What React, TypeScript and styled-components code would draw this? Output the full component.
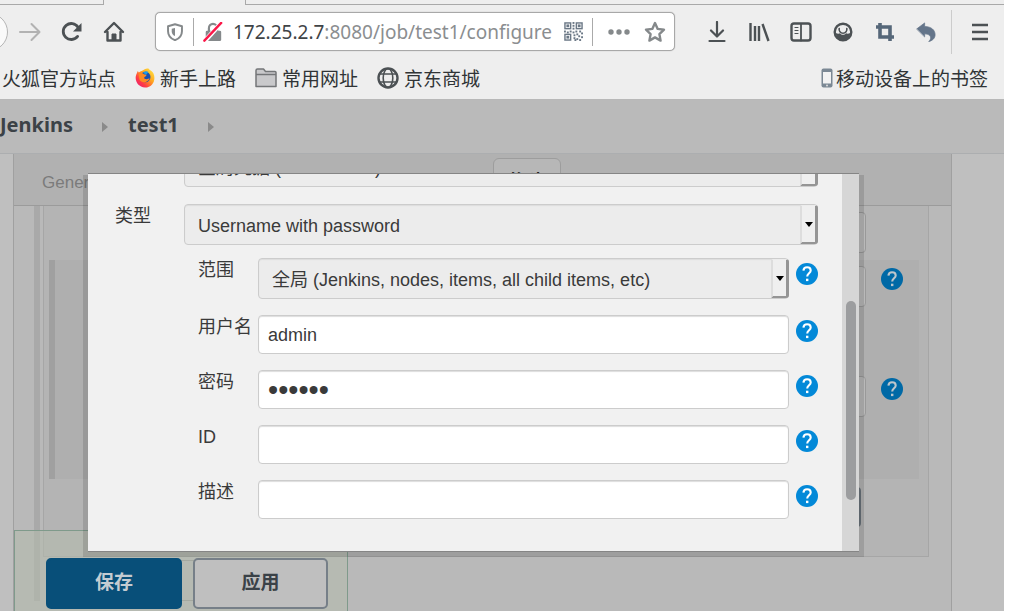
import React from 'react';
import styled, { createGlobalStyle, css } from 'styled-components';

const Global = createGlobalStyle`
  * { box-sizing: border-box; }
  body { margin: 0; background: #fff; }
  button, input, select { font: inherit; color: inherit; margin: 0; }
`;

const cjk = '"Noto Sans CJK SC", sans-serif';

const Window = styled.div`
  display: flex;
  flex-direction: column;
  height: 100vh;
  margin-right: 16px;
  overflow: hidden;
  font-family: "Noto Sans", ${cjk};
  color: #3a3a3a;
`;

/* ---------- browser chrome ---------- */

const TabStrip = styled.div`
  display: flex;
  flex: none;
  height: 5px;
  background: #eee;
`;

const TabSegment = styled.div<{ $width?: number; $active?: boolean }>`
  flex: ${p => (p.$width ? `0 0 ${p.$width}px` : '1')};
  ${p => (p.$active
    ? css`border: solid #a9a9a9; border-width: 0 1px;`
    : css`border-bottom: 1px solid #a9a9a9; box-shadow: 0 1px 0 #ccc;`)}
`;

const Toolbar = styled.nav`
  display: flex;
  flex: none;
  align-items: center;
  height: 53px;
  background: #eee;
  color: #4c5154;
`;

const IconButton = styled.button<{ $gap?: number; $faint?: boolean }>`
  display: flex;
  flex: none;
  margin-left: ${p => p.$gap ?? 20}px;
  padding: 0;
  border: 0;
  background: none;
  color: ${p => (p.$faint ? '#b2b2b2' : 'inherit')};
`;

const BackButton = styled.button`
  flex: none;
  width: 38px;
  height: 38px;
  margin-left: -30px;
  border: 1px solid #b5b5b5;
  border-radius: 50%;
  background: #fafafa;
`;

const AddressBar = styled.div`
  display: flex;
  flex: 1;
  align-items: center;
  height: 39px;
  min-width: 0;
  margin-left: 30px;
  padding: 0 8px 0 10px;
  border: 1px solid #a8a8a8;
  border-radius: 5px;
  background: #fff;
  box-shadow: 0 0 1px #999;
  color: #85898b;
`;

const Address = styled.div`
  flex: 1;
  margin-left: 10px;
  font-size: 19px;
  line-height: 24px;
  white-space: nowrap;
  color: #8b8e90;
  b { font-weight: 400; color: #3f4447; }
`;

const Rule = styled.span<{ $height: number; $gap: number; $faint?: boolean }>`
  flex: none;
  width: 1px;
  height: ${p => p.$height}px;
  margin: 0 ${p => p.$gap}px;
  background: ${p => (p.$faint ? '#ccc' : '#aaa')};
`;

const Bookmarks = styled.nav`
  display: flex;
  flex: none;
  align-items: center;
  height: 42px;
  padding: 0 16px 2px 2px;
  border-bottom: 1px solid #b8b8b8;
  background: #eee;
`;

const Bookmark = styled.a<{ $end?: boolean }>`
  display: flex;
  align-items: center;
  gap: ${p => (p.$end ? 3 : 5)}px;
  margin-left: ${p => (p.$end ? 'auto' : '0')};
  margin-right: ${p => (p.$end ? 0 : 19)}px;
  font: 19px/28px ${cjk};
  white-space: nowrap;
  text-decoration: none;
  color: #303436;
`;

/* ---------- dimmed Jenkins page ---------- */

const Page = styled.div`
  position: relative;
  display: flex;
  flex: 1;
  flex-direction: column;
  min-height: 0;
  overflow: hidden;
  background: #bfbfbf;
`;

const Breadcrumbs = styled.nav`
  display: flex;
  flex: none;
  align-items: center;
  height: 54px;
  padding-bottom: 3px;
  border-bottom: 1px solid #acaeb0;
  background: #bababa;
`;

const Crumb = styled.a`
  font-size: 20px;
  font-weight: 700;
  line-height: 26px;
  text-decoration: none;
  color: #3c4247;
`;

const CrumbArrow = styled.span`
  margin: 3px 20px 0 29px;
  border: solid transparent;
  border-width: 5px 0 5px 6px;
  border-left-color: #8a8a8a;
`;

const ConfigPanel = styled.main`
  display: flex;
  flex: 1 0 auto;
  flex-direction: column;
  margin: 0 52px 0 13px;
  border: solid #a0a0a0;
  border-width: 0 1px;
  background: #b9b9b9;
`;

const SectionTabs = styled.div`
  display: flex;
  align-items: flex-start;
  height: 52px;
  padding: 4px 0 0 28px;
  border-bottom: 1px solid #9b9b9b;
  background: #b1b1b1;
`;

const SectionTab = styled.a`
  flex: 0 0 451px;
  padding-top: 13px;
  font: 17px/24px "Liberation Sans", ${cjk};
  text-decoration: none;
  color: #7b7b7b;
`;

const TabButton = styled.button`
  width: 68px;
  height: 32px;
  padding: 8px 0 0;
  border: 1px solid #9d9d9d;
  border-radius: 6px;
  background: #b7b7b7;
  font-size: 18px;
  font-weight: 700;
  color: #222;
`;

const Section = styled.section`
  margin: 0 22px 0 20px;
  padding-left: 3px;
  border-left: 6px solid #a9a9a9;
`;

const Repository = styled.div`
  height: 351px;
  padding: 6px 9px 0 5px;
  border: solid #a6a6a6;
  border-width: 0 1px 1px;
  background: #b4b4b4;
`;

const RepositoryFields = styled.div`
  height: 219px;
  padding: 6px 0 0 128px;
  border-left: 6px solid #a0a0a0;
  background: #afafaf;
`;

const PageRow = styled.div<{ $height: number; $inset?: number }>`
  display: flex;
  align-items: flex-start;
  gap: 15px;
  height: ${p => p.$height}px;
  padding: 0 ${p => p.$inset ?? 16}px 0 ${p => (p.$inset ? 134 : 0)}px;
`;

const PageInput = styled.input`
  flex: 1;
  height: 41px;
  border: 1px solid #999;
  border-radius: 4px;
  background: #b9b9b9;
`;

const AdvancedButton = styled.button`
  display: block;
  width: 100px;
  height: 40px;
  margin: 8px 58px 0 auto;
  border: 2px solid #69727a;
  border-radius: 4px;
  background: #b9b9b9;
`;

const StepButton = styled.button`
  display: flex;
  align-items: center;
  justify-content: flex-end;
  width: 158px;
  height: 41px;
  margin: 3px 0 0 14px;
  padding: 0 12px;
  border: 1px solid #8c8c8c;
  background: #b9b9b9;
`;

const ActionBar = styled.div`
  position: absolute;
  bottom: 0;
  left: 14px;
  display: flex;
  gap: 11px;
  height: 81px;
  padding: 27px 19px 0 31px;
  border: 1px solid #7f9a8b;
  border-bottom: 0;
  background: rgba(180, 186, 174, 0.6);
`;

const ActionButton = styled.button<{ $primary?: boolean }>`
  width: ${p => (p.$primary ? 136 : 135)}px;
  height: 51px;
  padding: 0 0 6px;
  border: 2px solid ${p => (p.$primary ? '#084f79' : '#767f88')};
  border-radius: 5px;
  background: ${p => (p.$primary ? '#084f79' : '#bfbfbf')};
  font: 700 19px/28px ${cjk};
  color: ${p => (p.$primary ? '#c4ccd2' : '#3a4147')};
`;

/* ---------- credentials dialog ---------- */

const DialogShade = styled.div`
  position: absolute;
  top: 75px;
  right: 140px;
  left: 83px;
  padding: 0 5px 5px;
  background: rgba(0, 0, 0, 0.12);
`;

const Dialog = styled.div`
  display: flex;
  height: 379px;
  margin-top: -2px;
  border: solid #858585;
  border-width: 1px 0;
  background: #f1f1f1;
`;

const DialogForm = styled.form`
  display: flex;
  flex: 1;
  flex-direction: column;
  justify-content: flex-end;
  min-width: 0;
  padding: 0 24px 32px 27px;
  overflow: hidden;
  font: 18px/24px "Liberation Sans", ${cjk};
`;

const DialogRow = styled.div<{ $nested?: boolean; $height: number }>`
  display: flex;
  flex: none;
  align-items: flex-start;
  height: ${p => p.$height}px;
  padding-left: ${p => (p.$nested ? 83 : 0)}px;
`;

const Label = styled.label<{ $width: number }>`
  flex: 0 0 ${p => p.$width}px;
  white-space: nowrap;
`;

const SelectFrame = styled.div`
  position: relative;
  flex: 1;
  min-width: 0;
`;

const Select = styled.select`
  display: block;
  width: 100%;
  height: 41px;
  padding: 2px 24px 0 13px;
  appearance: none;
  border: 1px solid #ccc;
  border-radius: 4px;
  background: #ececec;
  box-shadow: inset 0 1px 1px #ddd;
`;

const SelectArrow = styled.span`
  position: absolute;
  top: 1px;
  right: 0;
  bottom: 1px;
  display: flex;
  align-items: center;
  justify-content: center;
  width: 18px;
  border: solid;
  border-width: 1px 3px 2px 2px;
  border-color: #ececec #959595 #959595 #ddd;
  border-radius: 0 3px 3px 0;
  background: #efefef;
  pointer-events: none;
  &::before {
    content: "";
    border: solid transparent;
    border-width: 5px 4px 0;
    border-top-color: #000;
  }
`;

const TextInput = styled.input`
  flex: 1;
  min-width: 0;
  height: 39px;
  padding: 2px 9px 0;
  border: 1px solid #ccc;
  border-radius: 4px;
  background: #fff;
  box-shadow: inset 0 1px 1px #ddd;
  &[type="password"] { font-size: 29px; }
`;

const HelpButton = styled.button<{ $dim?: boolean }>`
  display: flex;
  flex: none;
  margin: ${p => (p.$dim ? '2px 0 0' : '5px 0 0 7px')};
  padding: 0;
  border: 0;
  background: none;
  color: ${p => (p.$dim ? '#0069a6' : '#0389d8')};
  --mark: ${p => (p.$dim ? '#bcc6cc' : '#fff')};
`;

const ScrollTrack = styled.div`
  flex: 0 0 17px;
  padding: 127px 3px 0 4px;
  background: #d6d6d6;
`;

const ScrollThumb = styled.div`
  height: 199px;
  border-radius: 5px;
  background: #9c9d9f;
`;

/* ---------- icons ---------- */

const Svg = ({ size = 22, children }: { size?: number; children: React.ReactNode }) => (
  <svg width={size} height={size} viewBox="0 0 22 22" fill="none" stroke="currentColor" strokeWidth="2.4"
    strokeLinecap="round" strokeLinejoin="round" aria-hidden="true">{children}</svg>
);

const Help = ({ dim = false }: { dim?: boolean }) => (
  <HelpButton type="button" $dim={dim} aria-label="帮助">
    <svg width="22" height="22" viewBox="0 0 22 22" aria-hidden="true">
      <circle cx="11" cy="11" r="11" fill="currentColor" />
      <path d="M7.4 7.7C7.6 5.4 9 4.3 11.1 4.3s3.6 1.2 3.6 3.2c0 2.6-3.5 3-3.5 6" fill="none" stroke="var(--mark)" strokeWidth="2.1" />
      <rect x="10" y="15.7" width="2.4" height="2.4" fill="var(--mark)" />
    </svg>
  </HelpButton>
);

const ForwardIcon = () => <Svg><path d="M1 11H20M12.5 3l8 8-8 8" strokeWidth="2" /></Svg>;
const ReloadIcon = () => (
  <Svg><path d="M16.6 15.4A8 8 0 1 1 17 6.2L18.6 8" strokeWidth="2.8" /><path d="M20.5 2v8.4H12z" fill="currentColor" stroke="none" /></Svg>
);
const HomeIcon = () => (
  <Svg><path d="M2 11l9-9 9 9M4.5 11v8.5h13V11" /><path d="M9 19v-6h4v6z" fill="currentColor" strokeWidth="1" /></Svg>
);
const ShieldIcon = () => (
  <Svg size={18}><path d="M11 1.5L19.5 4v6c0 5.600-3.500 9-8.500 11C6 19 2.500 15.600 2.500 10V4z" /><path d="M11 6v10c-3-1.500-4-3.500-4-6V7z" fill="currentColor" stroke="none" /></Svg>
);
const LockIcon = () => (
  <Svg size={20}>
    <path d="M6.500 10V6.500a4.500 4.500 0 0 1 9 0V10" /><rect x="3" y="9.500" width="17" height="11.500" rx="1.500" fill="currentColor" stroke="none" />
    <path d="M2 21L20 1" stroke="#fff" strokeWidth="5" /><path d="M1.500 20.500L20 1" stroke="#fb1748" strokeWidth="2.600" />
  </Svg>
);
const qrDots = [[9, 0], [9, 3], [9, 6], [0, 9], [3, 10], [6, 9], [9, 10], [12, 9], [16, 9], [18, 11], [10, 13], [13, 12], [15, 14], [18, 15], [10, 16], [13, 17], [16, 18], [11, 18]];
const QrIcon = () => (
  <svg width="19" height="19" viewBox="0 0 20 20" fill="none" stroke="#6b7886" strokeWidth="1.500" aria-hidden="true">
    {[[1, 1], [13, 1], [1, 13]].map(([x, y]) => (
      <g key={`${x}-${y}`}><rect x={x} y={y} width="6" height="6" /><rect x={x + 2.3} y={y + 2.3} width="1.400" height="1.400" /></g>
    ))}
    {qrDots.map(([x, y]) => <rect key={`${x}-${y}`} x={x} y={y} width="2" height="2" fill="#6b7886" stroke="none" />)}
  </svg>
);
const MoreIcon = () => (
  <Svg><g fill="currentColor" stroke="none"><circle cx="3" cy="11" r="2.700" /><circle cx="11" cy="11" r="2.700" /><circle cx="19" cy="11" r="2.700" /></g></Svg>
);
const StarIcon = () => (
  <Svg><path d="M11 2l2.700 5.900 6.300.8-4.600 4.400 1.200 6.500-5.600-3.200-5.600 3.200 1.200-6.500L2 8.700l6.300-.8z" strokeWidth="2.400" /></Svg>
);
const DownloadIcon = () => <Svg><path d="M11 1v14M5 9.500l6 6 6-6M3.500 20h15" strokeWidth="2.200" /></Svg>;
const LibraryIcon = () => (
  <Svg><path d="M2.500 2v18M7 5v15M11 5v15" strokeWidth="2.400" strokeLinecap="butt" /><path d="M14.500 3L20.500 20" strokeWidth="2.400" strokeLinecap="butt" /></Svg>
);
const SidebarIcon = () => (
  <Svg><rect x="1.500" y="2.500" width="19" height="17" rx="2.500" /><path d="M11 3v16.500" strokeWidth="1.800" /><path d="M5 6.500h3M5 9.500h3M5 12.500h3" strokeWidth="1.200" /></Svg>
);
const AccountIcon = () => (
  <Svg><circle cx="11" cy="11" r="8.300" strokeWidth="2.400" /><path d="M7.200 7.500a3.900 3.900 0 1 0 7.600 0" strokeWidth="1.600" /><path d="M3.500 12c2 1 3.500 1 4.500.3 1.500 2 4.500 2 6 0 1 .7 2.500.7 4.500-.3-.8 4.500-4 7-7.500 7s-6.700-2.500-7.500-7z" fill="currentColor" stroke="none" /></Svg>
);
const CropIcon = () => (
  <Svg><path d="M6 2v14h14M2 6h14v14" stroke="#566779" strokeWidth="3.600" strokeLinecap="butt" strokeLinejoin="miter" /></Svg>
);
const UndoIcon = () => (
  <Svg size={20}><path d="M1 7.500L9.500 1v4C17 5 21 9 21 14c0 4-3 6.500-7 7.500 3-2.500 4-8-4.500-8.500v3z" fill="#64758a" stroke="#64758a" strokeWidth=".8" /></Svg>
);
const MenuIcon = () => <Svg><path d="M3 4h16M3 11h16M3 18h16" strokeLinecap="butt" /></Svg>;
const FirefoxIcon = () => (
  <svg width="20" height="20" viewBox="0 0 20 20" aria-hidden="true">
    <defs>
      <linearGradient id="fox" x1="1" y1="0" x2="0" y2="1">
        <stop offset="0" stopColor="#fff04a" /><stop offset=".4" stopColor="#ffa51e" /><stop offset=".7" stopColor="#ff3c45" /><stop offset="1" stopColor="#e31587" />
      </linearGradient>
    </defs>
    <path d="M2.800 3l1 1.500C6 3 7.500 3 8.500 2 10 .8 12 .5 13.500.5c.5 1.500 3.500 2 5 5 2.800 6.500-1 14-8.500 14C3 19.500-1 12 1.300 6.500z" fill="url(#fox)" />
    <circle cx="10.300" cy="9" r="5.200" fill="#1c4fae" />
    <path d="M8 4.500c2-1.500 4-1.500 5.500-.5L11 7z" fill="#1f9be8" />
    <path d="M3.500 5.500c2-1 4.500-.5 5.500.8L11.500 7c0 1.500-2 1.300-2.500 3 1.500 2 4.500 1 5.500 0-.5 4.500-8 6-10 1.500z" fill="#ff8a22" />
  </svg>
);
const FolderIcon = () => (
  <svg width="22" height="20" viewBox="0 0 22 20" fill="#c9c9cb" stroke="#747678" strokeWidth="1.500" strokeLinejoin="round" aria-hidden="true">
    <path d="M1 18.500V2.500q0-1.500 1.500-1.500h6l2 2.500H20q1 0 1 1v14z" /><path d="M1 6.500h20" />
  </svg>
);
const GlobeIcon = () => (
  <Svg><g stroke="#4c5154"><circle cx="11" cy="11" r="9.500" /><ellipse cx="11" cy="11" rx="4.800" ry="9.500" strokeWidth="1.600" /><path d="M2.500 7h17M2.500 15h17" strokeWidth="1.600" /></g></Svg>
);
const PhoneIcon = () => (
  <svg width="12" height="20" viewBox="0 0 12 20" aria-hidden="true">
    <rect x=".5" y=".5" width="11" height="19" rx="2" fill="#7b8894" /><rect x="2" y="4" width="8" height="11.500" fill="#f2f2f2" /><circle cx="6" cy="17.500" r="1" fill="#ddd" />
  </svg>
);

const textFields = [
  { id: 'username', label: '用户名', type: 'text', value: 'admin', height: 55 },
  { id: 'password', label: '密码', type: 'password', value: 'secret', height: 55 },
  { id: 'cred-id', label: 'ID', type: 'text', value: '', height: 55 },
  { id: 'description', label: '描述', type: 'text', value: '', height: 39 },
];

export default function App() {
  return (
    <Window>
      <Global />
      <TabStrip>
        <TabSegment $width={103} />
        <TabSegment $width={143} $active />
        <TabSegment />
      </TabStrip>
      <Toolbar aria-label="浏览器工具栏">
        <BackButton aria-label="后退" />
        <IconButton $gap={11} $faint aria-label="前进"><ForwardIcon /></IconButton>
        <IconButton aria-label="刷新"><ReloadIcon /></IconButton>
        <IconButton aria-label="主页"><HomeIcon /></IconButton>
        <AddressBar>
          <ShieldIcon />
          <Rule $height={28} $gap={9} />
          <LockIcon />
          <Address><b>172.25.2.7</b>:8080/job/test1/configure</Address>
          <QrIcon />
          <Rule $height={28} $gap={9} />
          <IconButton $gap={6} aria-label="更多"><MoreIcon /></IconButton>
          <IconButton $gap={14} aria-label="收藏"><StarIcon /></IconButton>
        </AddressBar>
        <IconButton $gap={31} aria-label="下载"><DownloadIcon /></IconButton>
        <IconButton aria-label="书库"><LibraryIcon /></IconButton>
        <IconButton aria-label="侧栏"><SidebarIcon /></IconButton>
        <IconButton aria-label="账户"><AccountIcon /></IconButton>
        <IconButton aria-label="截图"><CropIcon /></IconButton>
        <IconButton aria-label="撤销"><UndoIcon /></IconButton>
        <Rule $height={44} $gap={15} $faint />
        <IconButton $gap={2} aria-label="菜单"><MenuIcon /></IconButton>
        <Rule $height={0} $gap={6} />
      </Toolbar>
      <Bookmarks aria-label="书签">
        <Bookmark href="#">火狐官方站点</Bookmark>
        <Bookmark href="#"><FirefoxIcon />新手上路</Bookmark>
        <Bookmark href="#"><FolderIcon />常用网址</Bookmark>
        <Bookmark href="#"><GlobeIcon />京东商城</Bookmark>
        <Bookmark href="#" $end><PhoneIcon />移动设备上的书签</Bookmark>
      </Bookmarks>
      <Page>
        <Breadcrumbs aria-label="路径">
          <Crumb href="#">Jenkins</Crumb><CrumbArrow />
          <Crumb href="#">test1</Crumb><CrumbArrow />
        </Breadcrumbs>
        <ConfigPanel>
          <SectionTabs>
            <SectionTab href="#">General</SectionTab>
            <TabButton type="button">构建</TabButton>
          </SectionTabs>
          <Section>
            <Repository>
              <PageRow $height={48} $inset={53}><PageInput aria-label="名称" /></PageRow>
              <RepositoryFields>
                <PageRow $height={110}><PageInput aria-label="仓库" /><Help dim /></PageRow>
                <PageRow $height={44}><PageInput aria-label="分支" /><Help dim /></PageRow>
              </RepositoryFields>
              <AdvancedButton type="button" aria-label="高级" />
            </Repository>
            <StepButton type="button" aria-label="更多选项">
              <svg width="9" height="5" viewBox="0 0 9 5" aria-hidden="true"><path d="M0 0h9L4.500 5z" fill="#777" /></svg>
            </StepButton>
          </Section>
          <ActionBar>
            <ActionButton type="button" $primary>保存</ActionButton>
            <ActionButton type="button">应用</ActionButton>
          </ActionBar>
        </ConfigPanel>
        <DialogShade>
          <Dialog role="dialog" aria-label="添加凭据">
            <DialogForm>
              <DialogRow $height={58}>
                <Label $width={69} htmlFor="domain">Domain</Label>
                <SelectFrame>
                  <Select id="domain"><option>全局凭据 (unrestricted)</option></Select>
                  <SelectArrow />
                </SelectFrame>
              </DialogRow>
              <DialogRow $height={54}>
                <Label $width={69} htmlFor="kind">类型</Label>
                <SelectFrame>
                  <Select id="kind"><option>Username with password</option></Select>
                  <SelectArrow />
                </SelectFrame>
              </DialogRow>
              <DialogRow $height={57} $nested>
                <Label $width={60} htmlFor="scope">范围</Label>
                <SelectFrame>
                  <Select id="scope"><option>全局 (Jenkins, nodes, items, all child items, etc)</option></Select>
                  <SelectArrow />
                </SelectFrame>
                <Help />
              </DialogRow>
              {textFields.map(f => (
                <DialogRow key={f.id} $height={f.height} $nested>
                  <Label $width={60} htmlFor={f.id}>{f.label}</Label>
                  <TextInput id={f.id} type={f.type} defaultValue={f.value} />
                  <Help />
                </DialogRow>
              ))}
            </DialogForm>
            <ScrollTrack><ScrollThumb /></ScrollTrack>
          </Dialog>
        </DialogShade>
      </Page>
    </Window>
  );
}
